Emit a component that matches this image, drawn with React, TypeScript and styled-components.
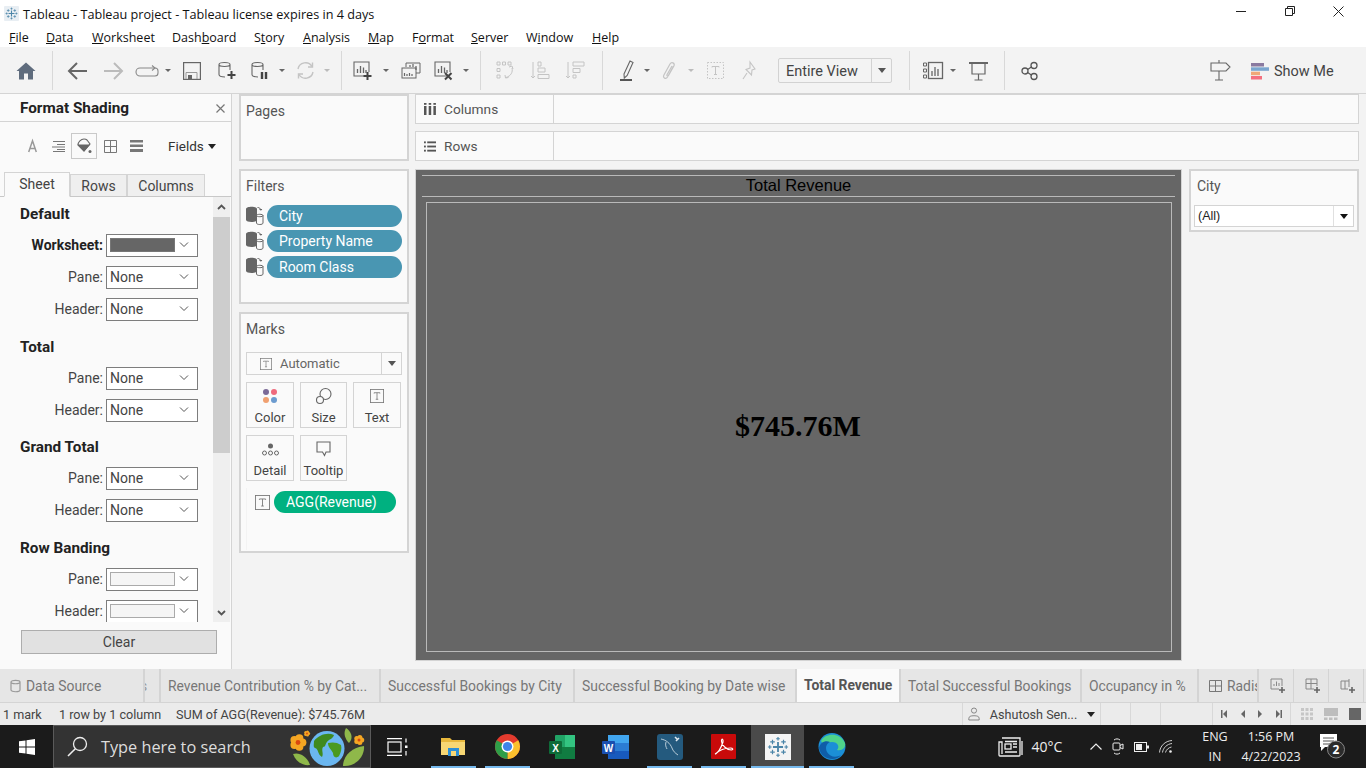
import React from 'react'
import styled, { createGlobalStyle } from 'styled-components'

const GlobalStyle = createGlobalStyle`
	html, body {
		margin: 0;
		padding: 0;
		background: #f3f3f3;
	}
	* {
		box-sizing: border-box;
	}
	body {
		font-family: 'Roboto', 'Liberation Sans', sans-serif;
		color: #444;
	}
`

const Page = styled.div`
	width: 1366px;
	height: 768px;
	overflow: hidden;
	display: flex;
	flex-direction: column;
`

const TitleBar = styled.div`
	height: 27px;
	background: #fff;
	display: flex;
	align-items: center;
	padding: 0 3px 0 4px;
	flex: none;
`

const TitleText = styled.div`
	font-family: 'Open Sans', sans-serif;
	font-size: 12.65px;
	color: #111;
	margin-left: 4px;
	flex: 1;
`

const WinButton = styled.div`
	width: 49px;
	padding-bottom: 5px;
	display: flex;
	justify-content: center;
`

const MenuBar = styled.div`
	height: 20px;
	background: #fff;
	display: flex;
	align-items: center;
	padding-left: 9px;
	flex: none;
`

const MenuItem = styled.div<{ $w: number }>`
	width: ${({ $w }) => $w}px;
	font-family: 'Open Sans', sans-serif;
	font-size: 12.5px;
	color: #111;
`

const Toolbar = styled.div`
	height: 47px;
	background: #f3f3f3;
	display: flex;
	align-items: center;
	flex: none;
`

const Tool = styled.div<{ $w: number; $ml?: number }>`
	width: ${({ $w }) => $w}px;
	margin-left: ${({ $ml }) => $ml || 0}px;
	height: 28px;
	display: flex;
	align-items: center;
	justify-content: center;
	flex: none;
`

const ToolSep = styled.div<{ $ml?: number }>`
	width: 1px;
	height: 39px;
	background: #d8d8d8;
	margin-left: ${({ $ml }) => $ml || 0}px;
	flex: none;
`

const Caret = styled.div<{ $color?: string }>`
	width: 0;
	height: 0;
	border-left: 3px solid transparent;
	border-right: 3px solid transparent;
	border-top: 3px solid ${({ $color }) => $color || '#666'};
`

const BigCaret = styled.div<{ $color?: string }>`
	width: 0;
	height: 0;
	border-left: 4px solid transparent;
	border-right: 4px solid transparent;
	border-top: 5px solid ${({ $color }) => $color || '#222'};
`

const ViewSelect = styled.div`
	width: 114px;
	height: 25px;
	margin-left: 12px;
	border: 1px solid #d2d2d2;
	border-radius: 2px;
	display: flex;
	align-items: center;
	flex: none;
	font-size: 14.5px;
	color: #444;
`

const ViewSelectLabel = styled.div`
	flex: 1;
	padding: 2px 0 0 7px;
`

const ViewSelectArrow = styled.div`
	width: 20px;
	height: 100%;
	border-left: 1px solid #d2d2d2;
	display: flex;
	align-items: center;
	justify-content: center;
`

const Spacer = styled.div`
	flex: 1;
`

const ShowMe = styled.div`
	width: 85px;
	margin: 2px 30px 0 16px;
	display: flex;
	align-items: center;
	gap: 4px;
	font-size: 14.5px;
	color: #444;
	flex: none;
`

const Main = styled.div`
	height: 576px;
	display: flex;
	flex: none;
	border-top: 1px solid #d4d4d4;
	margin-top: -1px;
`

const FormatPanel = styled.div`
	width: 232px;
	background: #fafafa;
	border-right: 1px solid #d4d4d4;
	display: flex;
	flex-direction: column;
	flex: none;
`

const PanelHead = styled.div`
	height: 28px;
	border-bottom: 1px solid #d4d4d4;
	display: flex;
	align-items: center;
	justify-content: space-between;
	padding: 1px 6px 0 20px;
	font-size: 15.3px;
	font-weight: 700;
	color: #222;
	flex: none;
`

const FormatIcons = styled.div`
	height: 50px;
	display: flex;
	align-items: center;
	padding: 0 0 2px 19px;
	flex: none;
`

const FormatIcon = styled.div<{ $on?: boolean }>`
	width: 26px;
	height: 26px;
	display: flex;
	align-items: center;
	justify-content: center;
	border: 1px solid ${({ $on }) => ($on ? '#c9c9c9' : 'transparent')};
`

const FieldsPick = styled.div`
	margin-left: 19px;
	display: flex;
	align-items: center;
	gap: 4px;
	font-size: 13.5px;
	color: #333;
`

const FormatTabs = styled.div`
	height: 25px;
	display: flex;
	align-items: flex-end;
	padding-left: 4px;
	border-bottom: 1px solid #c8c8c8;
	flex: none;
`

const FormatTab = styled.div<{ $w: number; $on?: boolean }>`
	width: ${({ $w }) => $w}px;
	height: ${({ $on }) => ($on ? 25 : 22)}px;
	background: ${({ $on }) => ($on ? '#fafafa' : '#efefef')};
	border: 1px solid #d4d4d4;
	border-bottom: ${({ $on }) => ($on ? '1px solid #fafafa' : 'none')};
	margin-bottom: ${({ $on }) => ($on ? -1 : 0)}px;
	display: flex;
	align-items: center;
	justify-content: center;
	font-size: 14px;
	color: #444;
	padding-bottom: ${({ $on }) => ($on ? 1 : 0)}px;
`

const FormatBody = styled.div`
	height: 425px;
	display: flex;
	overflow: hidden;
	flex: none;
`

const FormatList = styled.div`
	width: 213px;
	padding-right: 15px;
	flex: none;
`

const SectionTitle = styled.div<{ $mt: number }>`
	height: 32px;
	margin-top: ${({ $mt }) => $mt}px;
	padding: 2px 0 0 20px;
	display: flex;
	align-items: center;
	font-size: 15.3px;
	font-weight: 700;
	color: #222;
`

const FormatRow = styled.div`
	height: 32px;
	display: flex;
	align-items: center;
	justify-content: flex-end;
	gap: 3px;
`

const RowLabel = styled.div<{ $bold?: boolean }>`
	font-size: 14px;
	font-weight: ${({ $bold }) => ($bold ? 700 : 400)};
	color: ${({ $bold }) => ($bold ? '#222' : '#444')};
`

const RowSelect = styled.div`
	width: 92px;
	height: 23px;
	background: #fff;
	border: 1px solid #7d7d7d;
	display: flex;
	align-items: center;
	justify-content: space-between;
	padding: 0 8px 0 3px;
	font-size: 14px;
	color: #444;
`

const Swatch = styled.div<{ $color: string }>`
	width: 65px;
	height: 14px;
	background: ${({ $color }) => $color};
	border: 1px solid ${({ $color }) => ($color === '#666666' ? '#777' : '#aaa')};
`

const Scrollbar = styled.div`
	width: 17px;
	background: #efefef;
	display: flex;
	flex-direction: column;
	align-items: center;
	justify-content: space-between;
	flex: none;
`

const ScrollArrow = styled.div`
	height: 19px;
	display: flex;
	align-items: center;
`

const ScrollThumb = styled.div`
	width: 17px;
	height: 236px;
	background: #cdcdcd;
	margin-bottom: 150px;
`

const ClearWrap = styled.div`
	padding: 8px 14px 0 21px;
`

const ClearButton = styled.div`
	height: 24px;
	width: 196px;
	background: #e1e1e1;
	border: 1px solid #adadad;
	display: flex;
	align-items: center;
	justify-content: center;
	font-size: 14px;
	color: #444;
`

const CardColumn = styled.div`
	width: 170px;
	margin-left: 7px;
	display: flex;
	flex-direction: column;
	gap: 8px;
	flex: none;
`

const Card = styled.div<{ $h: number }>`
	height: ${({ $h }) => $h}px;
	background: #fafafa;
	border: 2px solid #d4d4d4;
	padding: 0 5px;
`

const CardTitle = styled.div<{ $pl?: number }>`
	height: 32px;
	padding: 0 0 2px ${({ $pl }) => $pl || 0}px;
	display: flex;
	align-items: center;
	font-size: 14px;
	color: #555;
`

const FilterRow = styled.div`
	height: 25.5px;
	display: flex;
	align-items: center;
	gap: 3px;
`

const Pill = styled.div<{ $color: string; $w: number }>`
	width: ${({ $w }) => $w}px;
	height: 22px;
	border-radius: 11px;
	background: ${({ $color }) => $color};
	color: #fff;
	font-size: 14px;
	display: flex;
	align-items: center;
	padding-left: 12px;
`

const MarkSelect = styled.div`
	height: 23px;
	margin-top: 6px;
	border: 1px solid #d4d4d4;
	display: flex;
	align-items: center;
	font-size: 13px;
	color: #666;
`

const MarkSelectLabel = styled.div`
	flex: 1;
	display: flex;
	align-items: center;
	gap: 8px;
	padding-left: 13px;
`

const MarkSelectArrow = styled.div`
	width: 20px;
	height: 100%;
	border-left: 1px solid #d4d4d4;
	display: flex;
	align-items: center;
	justify-content: center;
`

const MarkGrid = styled.div`
	display: grid;
	grid-template-columns: 48px 47px 48px;
	grid-auto-rows: 46px;
	column-gap: 6px;
	row-gap: 7px;
	margin-top: 7px;
`

const MarkButton = styled.div`
	border: 1px solid #d4d4d4;
	display: flex;
	flex-direction: column;
	align-items: center;
	justify-content: flex-end;
	gap: 3px;
	padding-bottom: 2px;
	font-size: 13px;
	color: #444;
`

const MarkIconBox = styled.div`
	height: 22px;
	display: flex;
	align-items: center;
`

const MarkField = styled.div`
	height: 62px;
	margin-top: 7px;
	padding: 3px 0 0 8px;
	display: flex;
	align-items: flex-start;
	gap: 4px;
	border-left: 1px solid #f3f3f3;
`

const MarkFieldIcon = styled.div`
	height: 22px;
	display: flex;
	align-items: center;
`

const Center = styled.div`
	width: 944px;
	margin-left: 6px;
	display: flex;
	flex-direction: column;
	flex: none;
`

const Shelf = styled.div`
	height: 30px;
	margin-bottom: 7px;
	background: #fafafa;
	border: 1px solid #d4d4d4;
	display: flex;
	flex: none;
`

const ShelfLabel = styled.div`
	width: 138px;
	border-right: 1px solid #d4d4d4;
	padding-left: 8px;
	display: flex;
	align-items: center;
	gap: 8px;
	font-size: 13.7px;
	color: #555;
`

const Workspace = styled.div`
	margin-top: 1px;
	display: flex;
	gap: 7px;
`

const View = styled.div`
	width: 767px;
	height: 492px;
	background: #666666;
	border: 1px solid #d4d4d4;
	padding: 5px 6px 8px;
	display: flex;
	flex-direction: column;
	flex: none;
`

const ViewTitle = styled.div`
	height: 22px;
	border-top: 1px solid #b9b9b9;
	border-bottom: 1px solid #b9b9b9;
	padding-bottom: 2px;
	display: flex;
	align-items: center;
	justify-content: center;
	font-family: 'Liberation Sans', sans-serif;
	font-size: 16.5px;
	color: #000;
	flex: none;
`

const ViewFrame = styled.div`
	flex: 1;
	margin: 5px 3px 0 4px;
	border: 1px solid #b9b9b9;
	display: flex;
	align-items: center;
	justify-content: center;
	font-family: 'Liberation Serif', serif;
	font-weight: 700;
	font-size: 30px;
	color: #000;
	padding: 0 2px 2px 0;
`

const CityCard = styled.div`
	width: 170px;
	height: 63px;
	background: #fafafa;
	border: 2px solid #d4d4d4;
	padding: 0 3px;
`

const CitySelect = styled.div`
	height: 22px;
	margin-top: 2px;
	background: #fff;
	border: 1px solid #d4d4d4;
	display: flex;
	align-items: center;
	font-family: 'Liberation Sans', sans-serif;
	font-size: 12.5px;
	color: #222;
`

const CitySelectLabel = styled.div`
	flex: 1;
	padding-left: 3px;
`

const CitySelectArrow = styled.div`
	width: 20px;
	height: 100%;
	border-left: 1px solid #e0e0e0;
	display: flex;
	align-items: center;
	justify-content: center;
`

const TabBar = styled.div`
	height: 34px;
	background: #e6e6e6;
	border-bottom: 1px solid #d4d4d4;
	display: flex;
	flex: none;
`

const SheetTab = styled.div<{ $w: number; $on?: boolean; $pl?: number }>`
	width: ${({ $w }) => $w}px;
	background: ${({ $on }) => ($on ? '#fafafa' : 'transparent')};
	border-right: 2px solid #d4d4d4;
	padding-left: ${({ $pl }) => ($pl === undefined ? 7 : $pl)}px;
	padding-bottom: ${({ $on }) => ($on ? 2 : 0)}px;
	display: flex;
	align-items: center;
	gap: 5px;
	font-size: 13.9px;
	font-weight: ${({ $on }) => ($on ? 700 : 400)};
	color: ${({ $on }) => ($on ? '#555' : '#777')};
	white-space: nowrap;
	overflow: hidden;
	flex: none;
`

const ClippedTabText = styled.span`
	margin-left: -5px;
	color: #999;
`

const NewTab = styled.div`
	width: 35px;
	border-right: 1px solid #d4d4d4;
	padding-left: 3px;
	display: flex;
	align-items: center;
	justify-content: center;
	flex: none;
`

const StatusBar = styled.div`
	height: 22px;
	background: #ebebeb;
	display: flex;
	align-items: center;
	font-size: 12.6px;
	color: #444;
	flex: none;
`

const StatusText = styled.div<{ $w: number; $pl?: number }>`
	width: ${({ $w }) => $w}px;
	padding-left: ${({ $pl }) => $pl || 0}px;
	white-space: nowrap;
	flex: none;
`

const StatusCell = styled.div<{ $w: number; $gap?: number; $lead?: boolean; $last?: boolean; $pl?: number }>`
	width: ${({ $w }) => $w}px;
	height: 100%;
	border-right: ${({ $last }) => ($last ? 'none' : '1px solid #d8d8d8')};
	border-left: ${({ $lead }) => ($lead ? '1px solid #d8d8d8' : 'none')};
	padding-left: ${({ $pl }) => $pl || 0}px;
	display: flex;
	align-items: center;
	justify-content: center;
	gap: ${({ $gap }) => $gap || 0}px;
	flex: none;
`

const Taskbar = styled.div`
	height: 43px;
	background: #1b1b1b;
	display: flex;
	align-items: center;
	flex: none;
`

const StartSlot = styled.div`
	width: 53px;
	display: flex;
	justify-content: center;
	flex: none;
`

const SearchBox = styled.div`
	width: 318px;
	height: 43px;
	background: #333;
	border: 1px solid #5a5a5a;
	display: flex;
	align-items: center;
	padding: 0 5px 0 13px;
	gap: 13px;
	font-family: 'Open Sans', sans-serif;
	font-size: 16.3px;
	color: #ddd;
	flex: none;
`

const SearchLabel = styled.div`
	flex: 1;
`

const TaskSlot = styled.div<{ $w: number; $ml?: number; $on?: boolean; $open?: boolean }>`
	width: ${({ $w }) => $w}px;
	height: 43px;
	margin-left: ${({ $ml }) => $ml || 0}px;
	background: ${({ $on }) => ($on ? '#4a4a4a' : 'transparent')};
	border-bottom: 2px solid ${({ $open }) => ($open ? '#76b9ed' : 'transparent')};
	padding-top: 2px;
	display: flex;
	align-items: center;
	justify-content: center;
	flex: none;
`

const TrayText = styled.div<{ $w: number; $ml?: number; $size?: number }>`
	width: ${({ $w }) => $w}px;
	margin-left: ${({ $ml }) => $ml || 0}px;
	font-family: 'Open Sans', sans-serif;
	font-size: ${({ $size }) => $size || 12.5}px;
	color: #eee;
	text-align: center;
	line-height: 20px;
	flex: none;
`

const Svg = styled.svg`
	display: block;
	flex: none;
	overflow: visible;
`

const g1 = '#666'
const g2 = '#c4c4c4'

const TableauMark = ({ size = 14, color = '#4b85a8' }: { size?: number; color?: string }) => (
	<Svg width={size} height={size} viewBox='0 0 24 24' stroke={color} strokeWidth='1.300' fill='none'>
		<path d='M12 6.500v11M6.500 12h11' strokeWidth='2' />
		<path d='M12 1v4M10 3h4M12 19v4M10 21h4M1 12h4M3 10v4M19 12h4M21 10v4' />
		<path d='M6 4v5M3.500 6.500h5M18 4v5M15.500 6.500h5M6 15v5M3.500 17.500h5M18 15v5M15.500 17.500h5' />
	</Svg>
)

const Home = () => (
	<Svg width='20' height='18' viewBox='0 0 20 18'>
		<path d='M10 0.5 19.5 9H17v8.5h-5v-6H8v6H3V9H0.5Z' fill='#5f6c7d' />
	</Svg>
)

const Arrow = ({ color, flip }: { color: string; flip?: boolean }) => (
	<Svg width='21' height='18' viewBox='0 0 21 18' style={flip ? { transform: 'scaleX(-1)' } : undefined}>
		<path d='M20 9H2M10 1 2 9l8 8' stroke={color} strokeWidth='2' fill='none' />
	</Svg>
)

const Loop = () => (
	<Svg width='23' height='12' viewBox='0 0 23 12' fill='none' stroke='#888' strokeWidth='1.100'>
		<path d='M19 3H4a3.500 3.500 0 0 0 0 8h15a3 3 0 0 0 3-3V6a3 3 0 0 0-3-3Z' />
		<path d='M16 0.500 19 3l-3 2.500' />
	</Svg>
)

const Save = () => (
	<Svg width='18' height='18' viewBox='0 0 18 18' fill='none' stroke={g1} strokeWidth='1.200'>
		<rect x='0.600' y='0.600' width='16.800' height='16.800' />
		<path d='M3 17V10.500h11V17' strokeWidth='1' stroke='#999' />
		<rect x='5' y='13' width='4' height='4' fill={g1} stroke='none' />
	</Svg>
)

const Cylinder = () => (
	<path d='M1 3.500C1 .8 12 .8 12 3.500V9M1 3.500v10c0 1.500 2 2.400 6 2.500M1 3.500c0 2.600 11 2.600 11 0' />
)

const DbPlus = () => (
	<Svg width='19' height='19' viewBox='0 0 19 19' fill='none' stroke={g1} strokeWidth='1.100'>
		<Cylinder />
		<path d='M13.500 10v8M9.500 14h8' strokeWidth='2' stroke='#444' />
	</Svg>
)

const DbPause = () => (
	<Svg width='19' height='19' viewBox='0 0 19 19' fill='none' stroke={g1} strokeWidth='1.100'>
		<Cylinder />
		<path d='M11 11v7M15 11v7' strokeWidth='2.400' stroke='#444' />
	</Svg>
)

const Refresh = () => (
	<Svg width='19' height='19' viewBox='0 0 19 19' fill='none' stroke={g2} strokeWidth='1.400'>
		<path d='M2 8a7.600 7.600 0 0 1 14-2.500M17 11a7.600 7.600 0 0 1-14 2.500' />
		<path d='M16.500 1.500v4.500h-4.500M2.500 17.500v-4.500H7' />
	</Svg>
)

const ChartBase = () => (
	<g stroke={g1}>
		<path d='M13 15H1V1h15v10' strokeWidth='1.100' fill='none' />
		<path d='M4.500 12V8M7.500 12V5M10.500 12V6.500M13 12V9' strokeWidth='1.300' />
	</g>
)

const ChartPlus = () => (
	<Svg width='20' height='20' viewBox='0 0 20 20' fill='none'>
		<ChartBase />
		<path d='M14.500 11v8M10.500 15h8' strokeWidth='2' stroke='#444' />
	</Svg>
)

const ChartDup = () => (
	<Svg width='20' height='18' viewBox='0 0 20 18' fill='none' stroke={g1} strokeWidth='1'>
		<path d='M5 5V1h14v10h-4' />
		<rect x='1' y='6' width='14' height='10' />
		<path d='M9 5V3M12 5V2M15 8V4' strokeWidth='1.200' />
		<path d='M3.500 14v-3M6 14v-2M8.500 14v-3M11 14v-2' strokeWidth='1.200' />
	</Svg>
)

const ChartClear = () => (
	<Svg width='20' height='20' viewBox='0 0 20 20' fill='none'>
		<ChartBase />
		<path d='M11 12l6.500 6.500M17.500 12 11 18.500' strokeWidth='2' stroke='#444' />
	</Svg>
)

const SwapAxes = () => (
	<Svg width='19' height='19' viewBox='0 0 19 19' fill='none' stroke={g2} strokeWidth='1'>
		<path d='M1 1h3v3H1zM6.500 1h3v3h-3zM12 1h3v3h-3zM1 7.500h3v3H1zM1 14h3v3H1z' />
		<path d='M16 7c1 4-1 8-6 9.500M13 6l3-1 1 3M9 14l.5 3 3-.500' />
	</Svg>
)

const SortAsc = ({ desc }: { desc?: boolean }) => (
	<Svg width='19' height='19' viewBox='0 0 19 19' fill='none' stroke={g2} strokeWidth='1'>
		<path d='M2 1v16M0 15l2 2 2-2' />
		{desc ? (
			<path d='M7 1h11v4H7zM7 7.500h7v4H7zM7 14h3v3H7z' />
		) : (
			<path d='M7 1h3v4H7zM7 7h7v4H7zM7 13.500h11v4H7z' />
		)}
	</Svg>
)

const Pen = () => (
	<Svg width='15' height='21' viewBox='0 0 15 21' fill='none' stroke={g1} strokeWidth='1.100'>
		<path d='M4 14 10 1l3 1.500-5.800 13L4.300 18Z' />
		<path d='M0 20h12' strokeWidth='2' stroke='#555' />
	</Svg>
)

const Clip = () => (
	<Svg width='14' height='20' viewBox='0 0 14 20' fill='none' stroke={g2} strokeWidth='1.200'>
		<path d='M11.500 5 5.500 16c-1.500 2.500-5 1-3.700-1.800L8 3c1.500-2.500 5-1 4 1.800L6.500 14.500c-.6 1-2 .4-1.500-.7L10 5' />
	</Svg>
)

const TBox = ({ color = g2, dash, size = 17 }: { color?: string; dash?: boolean; size?: number }) => (
	<Svg width={size} height={size} viewBox='0 0 17 17' fill='none' stroke={color}>
		<rect x='0.500' y='0.500' width='16' height='16' strokeDasharray={dash ? '1.500 1.500' : undefined} />
		<path d='M5 5.500V4.500h7v1M8.500 4.500v8M7 12.500h3' strokeWidth='1' />
	</Svg>
)

const Pin = () => (
	<Svg width='16' height='19' viewBox='0 0 16 19' fill='none' stroke={g2} strokeWidth='1.100'>
		<path d='M8 1l5 7-3 1-.500 5-5.500-5.500 4-1.500Z M5 12l-4 6' />
	</Svg>
)

const LayoutChart = () => (
	<Svg width='21' height='18' viewBox='0 0 21 18' fill='none' stroke={g1} strokeWidth='1'>
		<path d='M.5 1h3v3h-3zM.5 7h3v3h-3zM.5 13h3v3h-3z' />
		<rect x='5.500' y='.5' width='14' height='16' strokeWidth='1.300' />
		<path d='M9 14V9M12 14V5M15 14V7' strokeWidth='1.300' />
	</Svg>
)

const Present = () => (
	<Svg width='19' height='20' viewBox='0 0 19 20' fill='none' stroke={g1} strokeWidth='1.200'>
		<path d='M0 2h19' strokeWidth='2' />
		<path d='M3 2v11h13V2M9.500 13v6M5.500 19h8' />
	</Svg>
)

const Share = () => (
	<Svg width='17' height='18' viewBox='0 0 17 18' fill='none' stroke='#555' strokeWidth='1.300'>
		<circle cx='4' cy='9' r='3' />
		<circle cx='13' cy='3.500' r='3' />
		<circle cx='13' cy='14.500' r='3' />
		<path d='M6.600 7.500 10.400 5M6.600 10.500l3.800 2.500' />
	</Svg>
)

const Sign = () => (
	<Svg width='21' height='21' viewBox='0 0 21 21' fill='none' stroke={g1} strokeWidth='1.100'>
		<path d='M1 3h15l4 4-4 4H1Z' />
		<path d='M9 0v3M9 11v9M5 20h8' />
	</Svg>
)

const ShowMeIcon = () => (
	<Svg width='19' height='17' viewBox='0 0 19 17'>
		<rect width='13' height='3.500' fill='#8a7aa0' />
		<rect y='4.300' width='18' height='3.500' fill='#7ba6cf' />
		<rect y='8.700' width='9' height='3.500' fill='#f0a878' />
		<rect y='13' width='11' height='3.500' fill='#f4707f' />
	</Svg>
)

const Close = () => (
	<Svg width='9' height='9' viewBox='0 0 9 9' stroke='#777' strokeWidth='1.200'>
		<path d='M.5.5l8 8M8.500.5l-8 8' />
	</Svg>
)

const Chevron = () => (
	<Svg width='10' height='6' viewBox='0 0 10 6' fill='none' stroke='#555' strokeWidth='1'>
		<path d='M1 .5 5 4.500 9 .5' />
	</Svg>
)

const DoubleSource = () => (
	<Svg width='18' height='20' viewBox='0 0 18 20'>
		<path d='M0 3c0-3 11-3 11 0v11c0 2.600-11 2.600-11 0Z' fill='#666' />
		<path d='M11.500 1.500c2 0 3 1 3.200 2.500M13.500 3l1.300 1.300L16 3' stroke='#666' fill='none' />
		<path d='M10.500 9.500c0-1.600 6.500-1.600 6.500 0v7.500c0 2-6.500 2-6.500 0Z' fill='#fafafa' stroke='#666' />
		<path d='M10.500 9.500c0 1.600 6.500 1.600 6.500 0' fill='none' stroke='#666' />
	</Svg>
)

const ColorDots = () => (
	<Svg width='14' height='14' viewBox='0 0 14 14'>
		<circle cx='3' cy='3' r='3' fill='#7b6a97' />
		<circle cx='11' cy='3' r='3' fill='#ef6a7c' />
		<circle cx='3' cy='11' r='3' fill='#f0a070' />
		<circle cx='11' cy='11' r='3' fill='#6c9bcf' />
	</Svg>
)

const SizeIcon = () => (
	<Svg width='16' height='16' viewBox='0 0 16 16' fill='none' stroke={g1} strokeWidth='1.100'>
		<circle cx='9.500' cy='6' r='5.500' />
		<circle cx='4' cy='12' r='3.500' fill='#fafafa' />
	</Svg>
)

const DetailIcon = () => (
	<Svg width='17' height='13' viewBox='0 0 17 13' fill='none' stroke={g1} strokeWidth='1'>
		<circle cx='8.500' cy='3' r='2.500' fill='#666' stroke='none' />
		<circle cx='2.500' cy='10' r='2' />
		<circle cx='8.500' cy='10' r='2' />
		<circle cx='14.500' cy='10' r='2' />
	</Svg>
)

const TooltipIcon = () => (
	<Svg width='15' height='16' viewBox='0 0 15 16' fill='none' stroke={g1} strokeWidth='1.100'>
		<path d='M1 1h13v10h-4l-1.500 3.500L6.500 11H1Z' />
	</Svg>
)

const ColumnsIcon = () => (
	<Svg width='12' height='12' viewBox='0 0 12 12' fill='#555'>
		<rect x='0' y='3' width='2.500' height='9' />
		<rect x='0' y='0' width='2.500' height='1.800' />
		<rect x='4.700' y='3' width='2.500' height='9' />
		<rect x='4.700' y='0' width='2.500' height='1.800' />
		<rect x='9.400' y='3' width='2.500' height='9' />
		<rect x='9.400' y='0' width='2.500' height='1.800' />
	</Svg>
)

const RowsIcon = () => (
	<Svg width='12' height='11' viewBox='0 0 13 11' fill='#555'>
		<rect y='0' width='2' height='2' />
		<rect x='3.500' y='0' width='9.500' height='2' />
		<rect y='4.500' width='2' height='2' />
		<rect x='3.500' y='4.500' width='9.500' height='2' />
		<rect y='9' width='2' height='2' />
		<rect x='3.500' y='9' width='9.500' height='2' />
	</Svg>
)

const SmallDb = () => (
	<Svg width='11' height='14' viewBox='0 0 11 14' fill='none' stroke='#999' strokeWidth='1.200'>
		<path d='M1 3C1 .7 10 .7 10 3V11C10 13.300 1 13.300 1 11ZM1 3C1 5.300 10 5.300 10 3' />
	</Svg>
)

const NewSheet = () => (
	<Svg width='16' height='16' viewBox='0 0 16 16' fill='none'>
		<path d='M9 11H1V1h11v7' stroke='#888' />
		<path d='M4 8V6M6.500 8V3.500M9 8V5' stroke='#888' />
		<path d='M12 9v6M9 12h6' stroke='#666' strokeWidth='1.600' />
	</Svg>
)

const NewDash = () => (
	<Svg width='16' height='16' viewBox='0 0 16 16' fill='none'>
		<path d='M9 11H1V1h11v7M1 5.500h11M6 1v10' stroke='#888' />
		<path d='M12 9v6M9 12h6' stroke='#666' strokeWidth='1.600' />
	</Svg>
)

const NewStory = () => (
	<Svg width='16' height='16' viewBox='0 0 16 16' fill='none'>
		<path d='M8 11H1V3h4v8M5 3h4v6M9 1v2' stroke='#888' />
		<path d='M12 9v6M9 12h6' stroke='#666' strokeWidth='1.600' />
	</Svg>
)

const Person = () => (
	<Svg width='12' height='14' viewBox='0 0 14 16' fill='none' stroke='#777'>
		<circle cx='7' cy='4' r='3' />
		<path d='M1 15v-2c0-2 2-3 6-3s6 1 6 3v2Z' />
	</Svg>
)

const Nav = ({ dir, bar }: { dir: 'l' | 'r'; bar?: boolean }) => (
	<Svg width='7' height='8' viewBox='0 0 7 8' fill='#666'>
		{dir === 'l' ? <path d='M6 0v8L2 4Z' /> : <path d='M1 0v8l4-4Z' />}
		{bar && <rect x={dir === 'l' ? 0 : 5.500} y='0' width='1.500' height='8' />}
	</Svg>
)

const ViewGrid = () => (
	<Svg width='12' height='12' viewBox='0 0 12 12' fill='#c6c6c6'>
		{[0, 4.500, 9].flatMap(y => [0, 4.500, 9].map(x => <rect key={`${x}-${y}`} x={x} y={y} width='3' height='3' />))}
	</Svg>
)

const ViewFilm = () => (
	<Svg width='14' height='12' viewBox='0 0 14 12' fill='#bdbdbd'>
		<rect width='14' height='8' />
		<rect y='9.500' width='3.500' height='2.500' />
		<rect x='5' y='9.500' width='3.500' height='2.500' />
		<rect x='10' y='9.500' width='3.500' height='2.500' />
	</Svg>
)

const ViewFull = () => (
	<Svg width='12' height='12' viewBox='0 0 12 12'>
		<rect width='12' height='12' fill='#666' />
	</Svg>
)

const WindowsLogo = () => (
	<Svg width='16' height='16' viewBox='0 0 16 16' fill='#fff'>
		<path d='M0 2.300 6.500 1.400V7.500H0ZM7.500 1.200 16 0V7.500H7.500ZM0 8.500H6.500V14.600L0 13.700ZM7.500 8.500H16V16L7.500 14.800Z' />
	</Svg>
)

const SearchIcon = () => (
	<Svg width='21' height='21' viewBox='0 0 21 21' fill='none' stroke='#eee' strokeWidth='1.300'>
		<circle cx='13' cy='8' r='6.500' />
		<path d='M8.300 12.700 1 20' strokeWidth='1.600' />
	</Svg>
)

const Flower = ({ x, y, r }: { x: number; y: number; r: number }) => (
	<g>
		{[0, 72, 144, 216, 288].map(a => (
			<circle
				key={a}
				cx={x + Math.cos((a * Math.PI) / 180) * r * 0.55}
				cy={y + Math.sin((a * Math.PI) / 180) * r * 0.55}
				r={r * 0.5}
				fill='#f5a623'
			/>
		))}
		<circle cx={x} cy={y} r={r * 0.3} fill='#d9480f' />
	</g>
)

const Doodle = () => (
	<Svg width='76' height='38' viewBox='0 0 76 38'>
		<path d='M4 26c6-2 14 2 17 11-7 1-14-3-17-11Z' fill='#8fb84a' />
		<path d='M60 15c-4-4-6-10-3-15 5 3 8 10 3 15Z' fill='#8fb84a' />
		<path d='M54 38c0-10 9-19 21-20 1 10-8 21-21 20Z' fill='#8fb84a' />
		<Flower x={9} y={14.500} r={8} />
		<Flower x={18} y={5.500} r={3} />
		<Flower x={70} y={12} r={5} />
		<circle cx='38' cy='20.500' r='17.500' fill='#6bb7f0' />
		<path d='M25 13c5-6 13-9 20-6-1 4-5 4-7 7-2 2-1 5-4 5-2 3 1 7-1 10-5-3-3-8-7-9-2-1-1-4-1-7Z' fill='#3f8a1f' />
		<path d='M39 15c4-1 9-1 13 2 1 4 0 7-2 11-3 3-6 1-6-3-1-3-5-5-5-10Z' fill='#4b9a1f' />
	</Svg>
)

const TaskView = () => (
	<Svg width='21' height='18' viewBox='0 0 21 18' fill='none' stroke='#fff' strokeWidth='1.200'>
		<rect x='1' y='4' width='13' height='10' />
		<path d='M0 .6h15M0 17.400h15M19 .5v4M19 13v4.500' />
		<rect x='18' y='7.500' width='2.500' height='2.500' fill='#fff' stroke='none' />
	</Svg>
)

const Explorer = () => (
	<Svg width='25' height='21' viewBox='0 0 25 21'>
		<path d='M0 2h9l2 2h13v15H0Z' fill='#e8b83c' />
		<path d='M0 6h24v13H0Z' fill='#f7d774' />
		<rect x='7' y='12' width='11' height='8' fill='#2c8fd6' />
		<rect x='10' y='15' width='5' height='5' fill='#f7d774' />
	</Svg>
)

const Chrome = () => (
	<Svg width='25' height='25' viewBox='0 0 25 25'>
		<circle cx='12.500' cy='12.500' r='12.500' fill='#e33b2e' />
		<path d='M12.500 12.500 23.300 6.250A12.500 12.500 0 0 1 12.500 25Z' fill='#fbc02d' />
		<path d='M12.500 12.500 12.500 25A12.500 12.500 0 0 1 1.700 6.250Z' fill='#2e9e48' />
		<circle cx='12.500' cy='12.500' r='6' fill='#fff' />
		<circle cx='12.500' cy='12.500' r='4.600' fill='#3f84ea' />
	</Svg>
)

const Excel = () => (
	<Svg width='26' height='24' viewBox='0 0 26 24'>
		<rect x='6' width='20' height='24' rx='1' fill='#21a366' />
		<rect x='16' width='10' height='12' fill='#33c481' />
		<rect x='6' y='12' width='20' height='12' fill='#107c41' />
		<rect y='6' width='13' height='13' rx='1' fill='#0e6b38' />
		<text x='6.500' y='16.500' fontSize='10' fontWeight='700' fill='#fff' textAnchor='middle' fontFamily='Liberation Sans'>X</text>
	</Svg>
)

const Word = () => (
	<Svg width='27' height='24' viewBox='0 0 27 24'>
		<rect x='6' width='21' height='24' rx='1' fill='#2b7cd3' />
		<rect x='6' width='21' height='8' fill='#41a5ee' />
		<rect x='6' y='16' width='21' height='8' fill='#185abd' />
		<rect y='6' width='13' height='13' rx='1' fill='#1a4fb0' />
		<text x='6.500' y='16.500' fontSize='10' fontWeight='700' fill='#fff' textAnchor='middle' fontFamily='Liberation Sans'>W</text>
	</Svg>
)

const MySql = () => (
	<Svg width='26' height='26' viewBox='0 0 26 26'>
		<rect width='26' height='26' rx='3' fill='#245a7e' />
		<path d='M4 5c5 1 9 4 11 9 1 3 3 5 6 7M9 8c-1 3 0 5 1 7' fill='none' stroke='#b9cdd9' strokeWidth='1' />
		<path d='M18 3l3 3M19 7l3-3' stroke='#dfe9ef' strokeWidth='1.500' />
	</Svg>
)

const Acrobat = () => (
	<Svg width='25' height='25' viewBox='0 0 25 25'>
		<rect width='25' height='25' rx='1' fill='#c80a0a' />
		<path d='M4 20c3-1 6-6 8-12 .5-3-1.500-4-1.500-1 0 4 5 9 10 9 2 0 1.500-2-1-2-5 0-11 2-15 6Z' fill='none' stroke='#fff' strokeWidth='1.200' />
	</Svg>
)

const TableauTask = () => (
	<Svg width='26' height='26' viewBox='0 0 26 26'>
		<rect width='26' height='26' fill='#f4f4f4' />
		<g transform='translate(2 2)'>
			<TableauMark size={22} color='#4b85a8' />
		</g>
	</Svg>
)

const Edge = () => (
	<Svg width='28' height='27' viewBox='0 0 28 27'>
		<circle cx='14' cy='13.500' r='13.500' fill='#1b8fd6' />
		<path d='M3 8C7 0 22-1 27 10c1 5-3 8-8 7 3-3 1-8-5-8C8 9 5 12 3 8Z' fill='#4fd38a' />
		<path d='M1 15c1-5 6-8 11-6-4 2-5 6-3 10 3 5 9 6 14 3-5 7-20 5-22-7Z' fill='#0f5da8' />
	</Svg>
)

const News = () => (
	<Svg width='26' height='20' viewBox='0 0 26 20' fill='none' stroke='#eee' strokeWidth='1.300'>
		<path d='M4 1h18v17a1 1 0 0 1-1 1H2a1 1 0 0 1-1-1V5h3v12' />
		<rect x='7' y='7' width='6' height='5' />
		<path d='M7 4.500h12M15 7h4M15 10h4M7 15h12' />
		<path d='M24 4v14' />
	</Svg>
)

const TrayUp = () => (
	<Svg width='12' height='7' viewBox='0 0 12 7' fill='none' stroke='#eee' strokeWidth='1.200'>
		<path d='M.5 6.500 6 1l5.500 5.500' />
	</Svg>
)

const Meet = () => (
	<Svg width='12' height='17' viewBox='0 0 12 17' fill='none' stroke='#eee'>
		<rect x='1' y='5' width='7' height='7' rx='1' />
		<path d='M8 7.500 11 6v5l-3-1.500M2 2c2-1.500 4-1.500 6 0M2 15c2 1.500 4 1.500 6 0' />
	</Svg>
)

const Battery = () => (
	<Svg width='15' height='10' viewBox='0 0 15 10'>
		<rect x='.5' y='.5' width='12' height='9' fill='none' stroke='#eee' />
		<rect x='2' y='2' width='6' height='6' fill='#eee' />
		<rect x='13' y='3.500' width='2' height='3' fill='#eee' />
	</Svg>
)

const Wifi = () => (
	<Svg width='14' height='13' viewBox='0 0 14 13' fill='none' stroke='#ccc'>
		<path d='M.5 12.500C1 6 6 1 13 .5M3.500 12.500C4 8 8 4 13 3.500M6.500 12.500c.5-2.500 3-5 6-5.500' />
		<circle cx='11.500' cy='11.500' r='1.300' fill='#eee' stroke='none' />
	</Svg>
)

const Notification = () => (
	<Svg width='26' height='25' viewBox='0 0 26 25'>
		<path d='M0 0h17v13H5l-4 4v-4H0Z' fill='#fff' />
		<path d='M3 4h11M3 7h11M3 10h11' stroke='#555' strokeWidth='1' />
		<circle cx='16' cy='15.500' r='8.500' fill='#2b2b2b' stroke='#888' strokeWidth='1' />
		<text x='16' y='20' textAnchor='middle' fontSize='12' fontWeight='700' fill='#fff' fontFamily='Open Sans'>2</text>
	</Svg>
)

const menus: [number, string, string, string][] = [
	[37, '', 'F', 'ile'],
	[46, '', 'D', 'ata'],
	[80, '', 'W', 'orksheet'],
	[82, 'Dash', 'b', 'oard'],
	[49, 'S', 't', 'ory'],
	[65, '', 'A', 'nalysis'],
	[44, '', 'M', 'ap'],
	[59, 'F', 'o', 'rmat'],
	[55, '', 'S', 'erver'],
	[66, 'W', 'i', 'ndow'],
	[50, '', 'H', 'elp'],
]

const formatSections = [
	{ title: 'Default', mt: 0, rows: [['Worksheet:', 'dark'], ['Pane:', 'None'], ['Header:', 'None']] },
	{ title: 'Total', mt: 5, rows: [['Pane:', 'None'], ['Header:', 'None']] },
	{ title: 'Grand Total', mt: 4, rows: [['Pane:', 'None'], ['Header:', 'None']] },
	{ title: 'Row Banding', mt: 5, rows: [['Pane:', 'light'], ['Header:', 'light']] },
]

const sheetTabs: { w: number; label: string; on?: boolean }[] = [
	{ w: 220, label: 'Revenue Contribution % by Cat...' },
	{ w: 194, label: 'Successful Bookings by City' },
	{ w: 222, label: 'Successful Booking by Date wise' },
	{ w: 104, label: 'Total Revenue', on: true },
	{ w: 181, label: 'Total Successful Bookings' },
	{ w: 117, label: 'Occupancy in %' },
]

const App = () => {
	return (
		<Page>
			<GlobalStyle />
			<TitleBar>
				<Svg width='15' height='15' viewBox='0 0 15 15'>
					<rect width='15' height='15' rx='1' fill='#e8eef3' />
					<g transform='translate(1 1)'>
						<TableauMark size={13} />
					</g>
				</Svg>
				<TitleText>Tableau - Tableau project - Tableau license expires in 4 days</TitleText>
				<WinButton>
					<Svg width='10' height='1' viewBox='0 0 10 1'>
						<rect width='10' height='1' fill='#222' />
					</Svg>
				</WinButton>
				<WinButton>
					<Svg width='10' height='10' viewBox='0 0 10 10' fill='none' stroke='#222'>
						<path d='M.5 2.500h7v7h-7zM2.500 2.500v-2h7v7h-2' />
					</Svg>
				</WinButton>
				<WinButton>
					<Svg width='11' height='11' viewBox='0 0 11 11' stroke='#222'>
						<path d='M.5.5l10 10M10.500.5l-10 10' />
					</Svg>
				</WinButton>
			</TitleBar>
			<MenuBar>
				{menus.map(([w, before, key, after]) => (
					<MenuItem key={key + after} $w={w}>
						{before}
						<u>{key}</u>
						{after}
					</MenuItem>
				))}
			</MenuBar>
			<Toolbar>
				<Tool $w={52}><Home /></Tool>
				<ToolSep />
				<Tool $w={48}><Arrow color='#666' /></Tool>
				<Tool $w={24}><Arrow color='#bbb' flip /></Tool>
				<Tool $w={32} $ml={6}><Loop /></Tool>
				<Tool $w={10}><Caret /></Tool>
				<Tool $w={38}><Save /></Tool>
				<Tool $w={32}><DbPlus /></Tool>
				<Tool $w={34}><DbPause /></Tool>
				<Tool $w={10}><Caret /></Tool>
				<Tool $w={36}><Refresh /></Tool>
				<Tool $w={8}><Caret $color='#bbb' /></Tool>
				<ToolSep $ml={10} />
				<Tool $w={36} $ml={3}><ChartPlus /></Tool>
				<Tool $w={10}><Caret /></Tool>
				<Tool $w={40}><ChartDup /></Tool>
				<Tool $w={26}><ChartClear /></Tool>
				<Tool $w={10} $ml={4}><Caret /></Tool>
				<ToolSep $ml={9} />
				<Tool $w={48}><SwapAxes /></Tool>
				<Tool $w={22}><SortAsc /></Tool>
				<Tool $w={48}><SortAsc desc /></Tool>
				<ToolSep $ml={3} />
				<Tool $w={30} $ml={9}><Pen /></Tool>
				<Tool $w={10}><Caret /></Tool>
				<Tool $w={34}><Clip /></Tool>
				<Tool $w={10}><Caret $color='#bbb' /></Tool>
				<Tool $w={38}><TBox dash /></Tool>
				<Tool $w={32}><Pin /></Tool>
				<ViewSelect>
					<ViewSelectLabel>Entire View</ViewSelectLabel>
					<ViewSelectArrow><BigCaret $color='#555' /></ViewSelectArrow>
				</ViewSelect>
				<ToolSep $ml={17} />
				<Tool $w={30} $ml={8}><LayoutChart /></Tool>
				<Tool $w={10}><Caret /></Tool>
				<Tool $w={40}><Present /></Tool>
				<ToolSep $ml={6} />
				<Tool $w={48}><Share /></Tool>
				<Spacer />
				<Tool $w={30}><Sign /></Tool>
				<ShowMe>
					<ShowMeIcon />
					Show Me
				</ShowMe>
			</Toolbar>
			<Main>
				<FormatPanel>
					<PanelHead>
						Format Shading
						<Close />
					</PanelHead>
					<FormatIcons>
						<FormatIcon>
							<Svg width='9' height='12' viewBox='0 0 9 12' fill='none' stroke='#999' strokeWidth='1.500'>
								<path d='M.7 12 4.500 .8 8.300 12M2 8.500h5' />
							</Svg>
						</FormatIcon>
						<FormatIcon>
							<Svg width='13' height='11' viewBox='0 0 13 11' stroke='#777'>
								<path d='M1 .5h12M5 3.500h8M0 6h13M5 8.500h8M1 10.500h12' />
							</Svg>
						</FormatIcon>
						<FormatIcon $on>
							<Svg width='15' height='16' viewBox='0 0 15 16' fill='none' stroke='#666' strokeWidth='1.100'>
								<path d='M1 7c0-3 3-6 6-6 2 0 3 1 3 1l3 4-6 7Z' />
								<path d='M1.500 7 12 7 7 13Z' fill='#666' />
								<circle cx='13' cy='13.500' r='1.500' fill='#666' stroke='none' />
							</Svg>
						</FormatIcon>
						<FormatIcon>
							<Svg width='13' height='13' viewBox='0 0 13 13' fill='none' stroke='#777'>
								<path d='M.5.5h12v12H.5zM6.500 .5v12M.5 6.500h12' />
							</Svg>
						</FormatIcon>
						<FormatIcon>
							<Svg width='13' height='12' viewBox='0 0 13 12' fill='#777'>
								<rect width='13' height='2.500' />
								<rect y='4.500' width='13' height='2.500' />
								<rect y='9' width='13' height='3' />
							</Svg>
						</FormatIcon>
						<FieldsPick>
							Fields
							<BigCaret />
						</FieldsPick>
					</FormatIcons>
					<FormatTabs>
						<FormatTab $w={66} $on>Sheet</FormatTab>
						<FormatTab $w={57}>Rows</FormatTab>
						<FormatTab $w={78}>Columns</FormatTab>
					</FormatTabs>
					<FormatBody>
						<FormatList>
							{formatSections.map(section => (
								<div key={section.title}>
									<SectionTitle $mt={section.mt}>{section.title}</SectionTitle>
									{section.rows.map(([label, value]) => (
										<FormatRow key={label}>
											<RowLabel $bold={label === 'Worksheet:'}>{label}</RowLabel>
											<RowSelect>
												{value === 'None' ? value : <Swatch $color={value === 'dark' ? '#666666' : '#f5f5f5'} />}
												<Chevron />
											</RowSelect>
										</FormatRow>
									))}
								</div>
							))}
						</FormatList>
						<Scrollbar>
							<ScrollArrow>
								<Svg width='9' height='6' viewBox='0 0 9 6' fill='none' stroke='#555' strokeWidth='1.800'>
									<path d='M1 5 4.500 1.500 8 5' />
								</Svg>
							</ScrollArrow>
							<ScrollThumb />
							<ScrollArrow>
								<Svg width='9' height='6' viewBox='0 0 9 6' fill='none' stroke='#555' strokeWidth='1.800'>
									<path d='M1 1 4.500 4.500 8 1' />
								</Svg>
							</ScrollArrow>
						</Scrollbar>
					</FormatBody>
					<ClearWrap>
						<ClearButton>Clear</ClearButton>
					</ClearWrap>
				</FormatPanel>
				<CardColumn>
					<Card $h={67}>
						<CardTitle>Pages</CardTitle>
					</Card>
					<Card $h={135}>
						<CardTitle>Filters</CardTitle>
						{['City', 'Property Name', 'Room Class'].map(label => (
							<FilterRow key={label}>
								<DoubleSource />
								<Pill $color='#4996b2' $w={136}>{label}</Pill>
							</FilterRow>
						))}
					</Card>
					<Card $h={241}>
						<CardTitle>Marks</CardTitle>
						<MarkSelect>
							<MarkSelectLabel>
								<TBox color='#777' size={12} />
								Automatic
							</MarkSelectLabel>
							<MarkSelectArrow><BigCaret $color='#555' /></MarkSelectArrow>
						</MarkSelect>
						<MarkGrid>
							<MarkButton><MarkIconBox><ColorDots /></MarkIconBox>Color</MarkButton>
							<MarkButton><MarkIconBox><SizeIcon /></MarkIconBox>Size</MarkButton>
							<MarkButton><MarkIconBox><TBox color='#777' size={14} /></MarkIconBox>Text</MarkButton>
							<MarkButton><MarkIconBox><DetailIcon /></MarkIconBox>Detail</MarkButton>
							<MarkButton><MarkIconBox><TooltipIcon /></MarkIconBox>Tooltip</MarkButton>
						</MarkGrid>
						<MarkField>
							<MarkFieldIcon><TBox color='#777' size={15} /></MarkFieldIcon>
							<Pill $color='#00b180' $w={122}>AGG(Revenue)</Pill>
						</MarkField>
					</Card>
				</CardColumn>
				<Center>
					<Shelf>
						<ShelfLabel><ColumnsIcon />Columns</ShelfLabel>
					</Shelf>
					<Shelf>
						<ShelfLabel><RowsIcon />Rows</ShelfLabel>
					</Shelf>
					<Workspace>
						<View>
							<ViewTitle>Total Revenue</ViewTitle>
							<ViewFrame>$745.76M</ViewFrame>
						</View>
						<CityCard>
							<CardTitle $pl={3}>City</CardTitle>
							<CitySelect>
								<CitySelectLabel>(All)</CitySelectLabel>
								<CitySelectArrow><BigCaret $color='#111' /></CitySelectArrow>
							</CitySelect>
						</CityCard>
					</Workspace>
				</Center>
			</Main>
			<TabBar>
				<SheetTab $w={145} $pl={10}><SmallDb />Data Source</SheetTab>
				<SheetTab $w={16} $pl={0}><ClippedTabText>s</ClippedTabText></SheetTab>
				{sheetTabs.map(tab => (
					<SheetTab key={tab.label} $w={tab.w} $on={tab.on}>{tab.label}</SheetTab>
				))}
				<SheetTab $w={60} $pl={10}>
					<Svg width='13' height='12' viewBox='0 0 13 12' fill='none' stroke='#777'>
						<path d='M.5.5h12v11H.5zM6.500 .5v11M.5 6h12' />
					</Svg>
					Radis
				</SheetTab>
				<NewTab><NewSheet /></NewTab>
				<NewTab><NewDash /></NewTab>
				<NewTab><NewStory /></NewTab>
			</TabBar>
			<StatusBar>
				<StatusText $w={59} $pl={3}>1 mark</StatusText>
				<StatusText $w={117}>1 row by 1 column</StatusText>
				<StatusText $w={786}>SUM of AGG(Revenue): $745.76M</StatusText>
				<StatusCell $w={139} $gap={10} $lead>
					<Person />
					Ashutosh Sen...
					<BigCaret />
				</StatusCell>
				<StatusCell $w={30} />
				<StatusCell $w={30} />
				<StatusCell $w={52} />
				<StatusCell $w={78} $gap={11}>
					<Nav dir='l' bar />
					<Nav dir='l' />
					<Nav dir='r' />
					<Nav dir='r' bar />
				</StatusCell>
				<StatusCell $w={75} $gap={11} $pl={5} $last>
					<ViewGrid />
					<ViewFilm />
					<ViewFull />
				</StatusCell>
			</StatusBar>
			<Taskbar>
				<StartSlot><WindowsLogo /></StartSlot>
				<SearchBox>
					<SearchIcon />
					<SearchLabel>Type here to search</SearchLabel>
					<Doodle />
				</SearchBox>
				<TaskSlot $w={53}><TaskView /></TaskSlot>
				<TaskSlot $w={45} $ml={7} $open><Explorer /></TaskSlot>
				<TaskSlot $w={45} $ml={9} $open><Chrome /></TaskSlot>
				<TaskSlot $w={45} $ml={9}><Excel /></TaskSlot>
				<TaskSlot $w={45} $ml={9}><Word /></TaskSlot>
				<TaskSlot $w={45} $ml={9} $open><MySql /></TaskSlot>
				<TaskSlot $w={45} $ml={9} $open><Acrobat /></TaskSlot>
				<TaskSlot $w={53} $ml={5} $on $open><TableauTask /></TaskSlot>
				<TaskSlot $w={45} $ml={5} $open><Edge /></TaskSlot>
				<TaskSlot $w={28} $ml={143}><News /></TaskSlot>
				<TrayText $w={40} $ml={2} $size={14}>40°C</TrayText>
				<TaskSlot $w={24} $ml={17}><TrayUp /></TaskSlot>
				<TaskSlot $w={20}><Meet /></TaskSlot>
				<TaskSlot $w={26}><Battery /></TaskSlot>
				<TaskSlot $w={24}><Wifi /></TaskSlot>
				<TrayText $w={40} $ml={17}>ENG<br />IN</TrayText>
				<TrayText $w={72}>1:56 PM<br />4/22/2023</TrayText>
				<TaskSlot $w={34} $ml={9}><Notification /></TaskSlot>
			</Taskbar>
		</Page>
	)
}

export default App
